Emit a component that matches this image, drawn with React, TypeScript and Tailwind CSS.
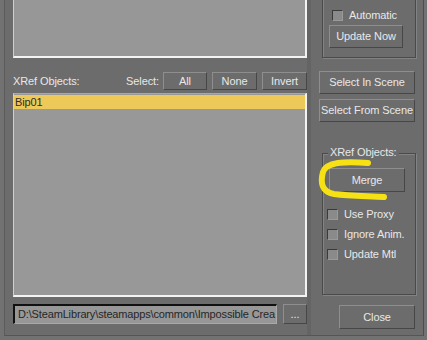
import React from 'react';

// 3ds Max style XRef Objects dialog (cropped)

const font = { fontFamily: '"Liberation Sans", Arial, sans-serif' };

function Btn({ children, className = '' }: { children: React.ReactNode; className?: string }) {
  return (
    <div
      className={`flex items-center justify-center border border-t-[#8e8e8e] border-l-[#8e8e8e] border-b-[#474747] border-r-[#474747] bg-[#6c6c6c] text-[11px] text-[#e8e8e8] leading-none ${className}`}
    >
      {children}
    </div>
  );
}

function Check({ label }: { label: string }) {
  return (
    <div className="flex items-center h-[12px]">
      <div className="w-[11px] h-[11px] border border-t-[#3a3a3a] border-l-[#3a3a3a] border-b-[#9a9a9a] border-r-[#9a9a9a] bg-[#8a8a8a]" />
      <span className="ml-[6px] text-[11px] text-[#e8e8e8] leading-none">{label}</span>
    </div>
  );
}

export default function App() {
  return (
    <div className="relative w-[427px] h-[340px] overflow-hidden bg-[#727272] tracking-[-0.1px]" style={font}>
      <div className="absolute inset-0 ml-[4px] mr-[3px] mb-[4px] border-l border-r border-b border-l-[#5c5c5c] border-r-[#4e4e4e] border-b-[#555555] bg-[#6c6c6c] flex">
        {/* left column */}
        <div className="ml-[8px] w-[294px] flex flex-col">
          <div className="-mt-[2px] h-[60px] bg-[#979797] border-l border-t border-r-2 border-b-2 border-l-[#cfcfcf] border-t-[#cfcfcf] border-r-[#f2f2f2] border-b-[#f4f4f4]" />
          <div className="mt-[14px] h-[18px] flex items-center">
            <span className="text-[11px] text-[#e8e8e8] leading-none">XRef Objects:</span>
            <span className="ml-auto text-[11px] text-[#e8e8e8] leading-none">Select:</span>
            <Btn className="ml-[4px] w-[44px] h-[18px]">All</Btn>
            <Btn className="ml-[5px] w-[45px] h-[18px]">None</Btn>
            <Btn className="ml-[5px] w-[45px] h-[18px]">Invert</Btn>
          </div>
          <div className="mt-[3px] h-[204px] bg-[#989898] border-l border-t border-r-2 border-b-2 border-l-[#cfcfcf] border-t-[#a8a8a8] border-r-[#f2f2f2] border-b-[#f4f4f4] pt-[1px]">
            <div className="h-[14px] bg-[#edc95a] text-[11px] text-[#2c2c2c] leading-[14px] pl-[1px]">Bip01</div>
          </div>
          <div className="mt-[7px] flex">
            <div className="w-[264px] h-[20px] bg-[#979797] border-t-2 border-l-2 border-r border-b border-t-[#111111] border-l-[#111111] border-r-[#a9a9a9] border-b-[#a9a9a9] overflow-hidden whitespace-nowrap text-[11px] text-[#262626] leading-[16px] pl-[3px] tracking-[-0.15px]">
              D:\SteamLibrary\steamapps\common\Impossible Crea
            </div>
            <Btn className="ml-[6px] w-[24px] h-[20px]">...</Btn>
          </div>
        </div>

        {/* divider strip */}
        <div className="w-[4px] bg-[#646464]" />

        {/* right column */}
        <div className="ml-[8px] w-[97px] flex flex-col">
          <div className="ml-[3px] -mt-[2px] h-[60px] border border-[#4a4a4a] shadow-[inset_1px_1px_0_#838383,1px_1px_0_#838383] flex flex-col pl-[9px]">
            <div className="mt-[10px]">
              <Check label="Automatic" />
            </div>
            <Btn className="mt-[4px] -ml-[3px] w-[74px] h-[23px]">Update Now</Btn>
          </div>
          <Btn className="mt-[13px] w-[96px] h-[23px]">Select In Scene</Btn>
          <Btn className="mt-[5px] w-[96px] h-[23px]">Select From Scene</Btn>

          <div className="relative ml-[3px] mt-[31px] h-[142px] border border-[#4a4a4a] shadow-[inset_1px_1px_0_#838383,1px_1px_0_#838383] flex flex-col pl-[4px]">
            <span className="absolute -top-[7px] left-[5px] px-[2px] bg-[#6c6c6c] text-[11px] text-[#e8e8e8] leading-none">XRef Objects:</span>
            <Btn className="mt-[14px] ml-[2px] w-[76px] h-[24px]">Merge</Btn>
            <div className="mt-[16px] flex flex-col gap-[8px]">
              <Check label="Use Proxy" />
              <Check label="Ignore Anim." />
              <Check label="Update Mtl" />
            </div>
          </div>
          <Btn className="mt-[10px] ml-[20px] w-[76px] h-[24px]">Close</Btn>
        </div>
      </div>

      {/* highlighter scribble */}
      <svg className="absolute inset-0 pointer-events-none" width="427" height="340">
        <path
          d="M368 163 C 345 161, 326 162, 323 172 C 320 183, 322 192, 334 194 C 350 196, 368 196, 384 197"
          fill="none"
          stroke="#f6e214"
          strokeWidth="6"
          strokeLinecap="round"
        />
      </svg>
    </div>
  );
}
